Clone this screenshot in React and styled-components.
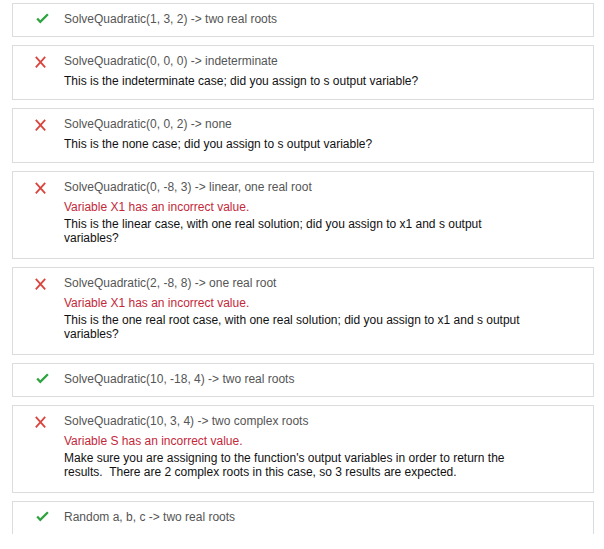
import React from 'react'
import styled, { createGlobalStyle } from 'styled-components'

const GlobalStyle = createGlobalStyle`
  body {
    margin: 0;
    background: #fff;
    font-family: "Liberation Sans", Arial, sans-serif;
  }
`

const Panel = styled.div`
  box-sizing: border-box;
  width: 604px;
  height: 534px;
  overflow: hidden;
  padding: 3px 10px 0 12px;
`

const Card = styled.div`
  display: flex;
  border: 1px solid #dcdcdc;
  background: #fff;
  margin-bottom: 8px;
`

const IconCell = styled.div`
  flex: none;
  box-sizing: border-box;
  width: 51px;
  padding: 9px 0 0 22px;

  svg {
    display: block;
    overflow: visible;
  }
`

const Body = styled.div`
  flex: 1;
  min-width: 0;
  padding: 7px 10px ${(p) => (p.$failed ? '11px' : '9px')} 0;
  font-size: 12px;
`

const Title = styled.div`
  line-height: 16px;
  color: #555;
`

const ErrorLine = styled.div`
  margin-top: 4px;
  line-height: 17px;
  color: #c4283a;
`

const Desc = styled.div`
  max-width: 465px;
  margin-top: ${(p) => (p.$afterError ? '1px' : '5px')};
  margin-bottom: 2px;
  line-height: 14px;
  color: #111;
`

const CheckIcon = () => (
  <svg width="14" height="14" viewBox="0 0 14 14">
    <path d="M2.2 5.4 L5.3 8.9 L12.9 1.2" fill="none" stroke="#2ea33e" strokeWidth="2.3" />
  </svg>
)

const CrossIcon = () => (
  <svg width="14" height="14" viewBox="0 0 14 14">
    <path
      d="M0.8 1.8 L10.2 12.4 M10.2 1.8 L0.8 12.4"
      fill="none"
      stroke="#d9463e"
      strokeWidth="1.8"
    />
  </svg>
)

const results = [
  { pass: true, title: 'SolveQuadratic(1, 3, 2) -> two real roots' },
  {
    title: 'SolveQuadratic(0, 0, 0) -> indeterminate',
    desc: 'This is the indeterminate case; did you assign to s output variable?',
  },
  {
    title: 'SolveQuadratic(0, 0, 2) -> none',
    desc: 'This is the none case; did you assign to s output variable?',
  },
  {
    title: 'SolveQuadratic(0, -8, 3) -> linear, one real root',
    error: 'Variable X1 has an incorrect value.',
    desc: 'This is the linear case, with one real solution; did you assign to x1 and s output variables?',
  },
  {
    title: 'SolveQuadratic(2, -8, 8) -> one real root',
    error: 'Variable X1 has an incorrect value.',
    desc: 'This is the one real root case, with one real solution; did you assign to x1 and s output variables?',
  },
  { pass: true, title: 'SolveQuadratic(10, -18, 4) -> two real roots' },
  {
    title: 'SolveQuadratic(10, 3, 4) -> two complex roots',
    error: 'Variable S has an incorrect value.',
    desc: "Make sure you are assigning to the function's output variables in order to return the results.\u00a0 There are 2 complex roots in this case, so 3 results are expected.",
  },
  { pass: true, title: 'Random a, b, c -> two real roots' },
]

const App = () => {
  return (
    <>
      <GlobalStyle />
      <Panel>
        {results.map((r, i) => (
          <Card key={i}>
            <IconCell>{r.pass ? <CheckIcon /> : <CrossIcon />}</IconCell>
            <Body $failed={!!r.error}>
              <Title>{r.title}</Title>
              {r.error && <ErrorLine>{r.error}</ErrorLine>}
              {r.desc && <Desc $afterError={!!r.error}>{r.desc}</Desc>}
            </Body>
          </Card>
        ))}
      </Panel>
    </>
  )
}

export default App
